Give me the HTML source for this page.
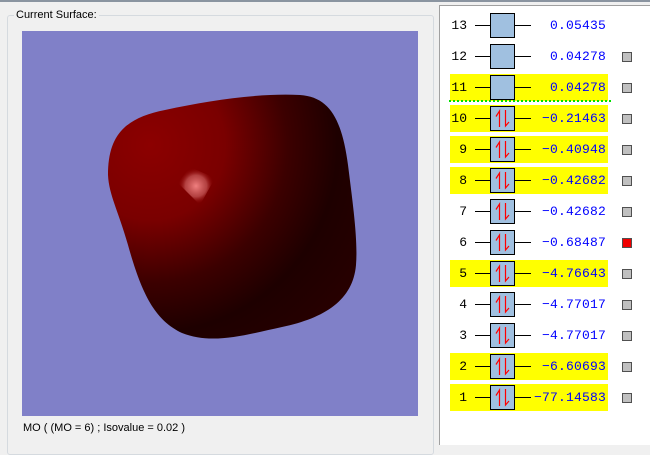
<!DOCTYPE html>
<html><head><style>
*{margin:0;padding:0;box-sizing:border-box}
body{width:650px;height:442px;background:#f0f0f0;position:relative;overflow:hidden;font-family:"Liberation Sans",sans-serif}
.topline{position:absolute;left:0;top:0;width:650px;height:2px;background:#8a94a0}
.grp{position:absolute;left:7px;top:15px;width:427px;height:440px;border:1px solid #d5dadf;border-radius:3px}
.lbl{position:absolute;left:14px;top:9px;background:#f0f0f0;padding:0 2px;font-size:11px;color:#000}
.vp{position:absolute;left:22px;top:31px;width:396px;height:385px;background:#8080c8}
.cap{position:absolute;left:23px;top:422px;font-size:11px}
.rp{position:absolute;left:439px;top:5px;width:211px;height:440px;background:#fff;border-left:1px solid #a0a0a0;border-top:1px solid #a0a0a0}
.row{position:absolute;left:0;width:210px;height:27px}
.hl{position:absolute;left:10px;top:0;width:158px;height:27px;background:#ffff00}
.num{position:absolute;left:10px;top:6px;width:17px;text-align:right;font:13px "Liberation Mono",monospace}
.ln{position:absolute;left:35px;top:13px;width:56px;height:1px;background:#000}
.box{position:absolute;left:50px;top:1px;width:25px;height:25px;background:#a0c0e0;border:1px solid #000}
.val{position:absolute;right:44px;top:6px;font:13px "Liberation Mono",monospace;color:#0000ff;letter-spacing:0.2px}
.cb{position:absolute;left:182px;top:9px;width:10px;height:10px;background:#c0c0c0;border:1px solid #505050}
.dot{position:absolute;left:449px;top:100px;width:162px;border-top:2px dotted #00e000}
</style></head><body>
<div class="topline"></div>
<div class="grp"></div>
<div class="lbl">Current Surface:</div>
<div class="vp">
<svg width="396" height="385" viewBox="22 31 396 385">
<defs>
<radialGradient id="g" cx="150" cy="145" r="250" gradientUnits="userSpaceOnUse">
<stop offset="0" stop-color="#8c0000"/><stop offset="0.3" stop-color="#7a0000"/><stop offset="0.55" stop-color="#3c0000"/><stop offset="0.75" stop-color="#1e0000"/><stop offset="1" stop-color="#280000"/></radialGradient>
<radialGradient id="h" cx="196" cy="186" r="18" gradientUnits="userSpaceOnUse">
<stop offset="0" stop-color="#f08080"/><stop offset="0.6" stop-color="#c05050" stop-opacity="0.8"/><stop offset="1" stop-color="#8c0000" stop-opacity="0"/></radialGradient>
</defs>
<path d="M108,175 C108,135 125,118 165,110 C210,100 260,93 300,95 C330,97 342,120 348,165 C353,205 358,240 356,265 C353,300 325,318 282,327 C245,335 212,345 182,333 C155,320 142,295 128,245 C118,210 109,195 108,175Z" fill="url(#g)"/>
<path d="M178,183 L190,167 L215,178 L200,205 Z" fill="url(#h)"/>
</svg>
</div>
<div class="cap">MO ( (MO = 6) ; Isovalue = 0.02 )</div>
<div class="rp">
<div class="row" style="top:6px"><div class="num">13</div><div class="ln"></div><div class="box"></div><div class="val">0.05435</div></div>
<div class="row" style="top:37px"><div class="num">12</div><div class="ln"></div><div class="box"></div><div class="val">0.04278</div><div class="cb"></div></div>
<div class="row" style="top:68px"><div class="hl"></div><div class="num">11</div><div class="ln"></div><div class="box"></div><div class="val">0.04278</div><div class="cb"></div></div>
</div>
<div class="dot"></div>
<script>
var d=[[10,"-0.21463",1,0],[9,"-0.40948",1,0],[8,"-0.42682",1,0],[7,"-0.42682",0,0],[6,"-0.68487",0,1],[5,"-4.76643",1,0],[4,"-4.77017",0,0],[3,"-4.77017",0,0],[2,"-6.60693",1,0],[1,"-77.14583",1,0]];
var rp=document.querySelector('.rp'),h='';
d.forEach(function(r,i){var t=99+31*i;
h+='<div class="row" style="top:'+t+'px">'+(r[2]?'<div class="hl"></div>':'')+'<div class="num">'+r[0]+'</div><div class="ln"></div><div class="box"><svg width="23" height="23"><path d="M8.5 20V4L5 9.5" stroke="#f00" stroke-width="1.2" fill="none"/><path d="M14.5 3V19L18 15" stroke="#f00" stroke-width="1.2" fill="none"/></svg></div><div class="val">'+r[1].replace('-','\u2212')+'</div><div class="cb"'+(r[3]?' style="background:#f00000"':'')+'></div></div>';});
rp.insertAdjacentHTML('beforeend',h);
</script>
</body></html>
